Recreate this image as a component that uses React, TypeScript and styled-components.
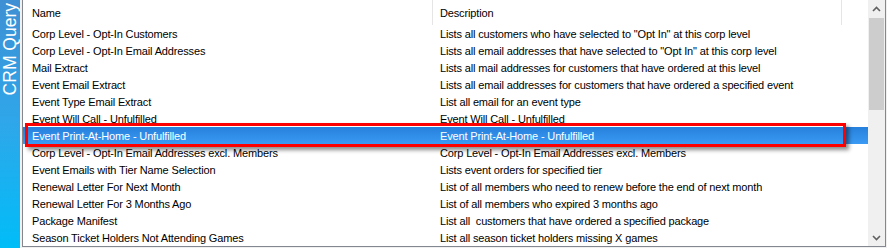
import React from "react";
import styled, { createGlobalStyle } from "styled-components";

const Global = createGlobalStyle`
  html, body { margin: 0; padding: 0; background: #f0f0f0; }
  #root { width: 887px; height: 248px; overflow: hidden; }
`;

const Frame = styled.div`
  display: flex;
  width: 887px;
  height: 248px;
  background: #f0f0f0;
  font-family: Tahoma, "Liberation Sans", Arial, sans-serif;
  font-size: 11px;
  letter-spacing: -0.15px;
  color: #000;
`;

const Sidebar = styled.div`
  width: 20px;
  height: 248px;
  flex: none;
  background: linear-gradient(to bottom, #3f8fd3 0%, #2ea7ea 50%, #00bdf8 100%);
  display: flex;
  align-items: flex-start;
  justify-content: center;
  overflow: hidden;
`;

const SideLabel = styled.div`
  writing-mode: vertical-rl;
  transform: rotate(180deg);
  color: #fff;
  font-family: "Liberation Sans", Arial, sans-serif;
  font-size: 17.5px;
  letter-spacing: 0;
  line-height: 20px;
  padding-bottom: 3px;
  white-space: nowrap;
`;

const ListView = styled.div`
  margin-left: 2px;
  width: 862px;
  height: 246px;
  border-left: 1px solid #828790;
  border-right: 1px solid #828790;
  border-bottom: 1px solid #828790;
  background: #fff;
  display: flex;
  position: relative;
`;

const Content = styled.div`
  flex: 1;
  display: flex;
  flex-direction: column;
`;

const HeaderRow = styled.div`
  display: grid;
  grid-template-columns: 410px 409px;
  height: 25px;
`;

const HeaderCell = styled.div<{ $pad: number }>`
  padding-left: ${(p) => p.$pad}px;
  display: flex;
  align-items: center;
  border-right: 1px solid #e5e5e5;
  height: 25px;
  padding-top: 1px;
  box-sizing: border-box;
`;

const Row = styled.div<{ $selected?: boolean }>`
  display: grid;
  grid-template-columns: 410px 409px;
  height: 17px;
  align-items: center;
  color: ${(p) => (p.$selected ? "#fff" : "#000")};
  background: ${(p) =>
    p.$selected ? "linear-gradient(to bottom, #2680dc, #3a9af4)" : "transparent"};
  white-space: pre;
`;

const Cell = styled.div<{ $pad: number }>`
  padding-left: ${(p) => p.$pad}px;
  overflow: hidden;
`;

const Highlight = styled.div`
  position: absolute;
  left: 2px;
  top: 123px;
  width: 821px;
  height: 24px;
  border: 3px solid #ff0000;
  box-sizing: border-box;
  box-shadow: 3px 3px 4px rgba(0, 0, 0, 0.45);
  pointer-events: none;
`;

const ScrollBar = styled.div`
  width: 17px;
  flex: none;
  background: #f0f0f0;
  display: flex;
  flex-direction: column;
  align-items: center;
`;

const ArrowBtn = styled.div`
  height: 17px;
  width: 17px;
  display: flex;
  align-items: center;
  justify-content: center;
`;

const Track = styled.div`
  flex: 1;
  width: 17px;
  display: flex;
  flex-direction: column;
  align-items: center;
  padding-top: 1px;
`;

const Thumb = styled.div`
  width: 15px;
  height: 92px;
  background: #cdcdcd;
`;

const Arrow = ({ up }: { up?: boolean }) => (
  <svg width="9" height="6" viewBox="0 0 9 6">
    <path
      d={up ? "M1 5 L4.5 1.5 L8 5" : "M1 1 L4.5 4.5 L8 1"}
      fill="none"
      stroke="#606060"
      strokeWidth="1.6"
    />
  </svg>
);

const rows: [string, string][] = [
  ["Corp Level - Opt-In Customers", 'Lists all customers who have selected to "Opt In" at this corp level'],
  ["Corp Level - Opt-In Email Addresses", 'Lists all email addresses that have selected to "Opt In" at this corp level'],
  ["Mail Extract", "Lists all mail addresses for customers that have ordered at this level"],
  ["Event Email Extract", "Lists all email addresses for customers that have ordered a specified event"],
  ["Event Type Email Extract", "List all email for an event type"],
  ["Event Will Call - Unfulfilled", "Event Will Call - Unfulfilled"],
  ["Event Print-At-Home - Unfulfilled", "Event Print-At-Home - Unfulfilled"],
  ["Corp Level - Opt-In Email Addresses excl. Members", "Corp Level - Opt-In Email Addresses excl. Members"],
  ["Event Emails with Tier Name Selection", "Lists event orders for specified tier"],
  ["Renewal Letter For Next Month", "List of all members who need to renew before the end of next month"],
  ["Renewal Letter For 3 Months Ago", "List of all members who expired 3 months ago"],
  ["Package Manifest", "List all  customers that have ordered a specified package"],
  ["Season Ticket Holders Not Attending Games", "List all season ticket holders missing X games"],
];

export default function App() {
  return (
    <>
      <Global />
      <Frame>
        <Sidebar>
          <SideLabel>CRM Query</SideLabel>
        </Sidebar>
        <ListView>
          <Content>
            <HeaderRow>
              <HeaderCell $pad={9}>Name</HeaderCell>
              <HeaderCell $pad={7}>Description</HeaderCell>
            </HeaderRow>
            {rows.map(([n, d], i) => (
              <Row key={i} $selected={i === 6}>
                <Cell $pad={9}>{n}</Cell>
                <Cell $pad={7}>{d}</Cell>
              </Row>
            ))}
          </Content>
          <ScrollBar>
            <ArrowBtn>
              <Arrow up />
            </ArrowBtn>
            <Track>
              <Thumb />
            </Track>
            <ArrowBtn>
              <Arrow />
            </ArrowBtn>
          </ScrollBar>
          <Highlight />
        </ListView>
      </Frame>
    </>
  );
}
